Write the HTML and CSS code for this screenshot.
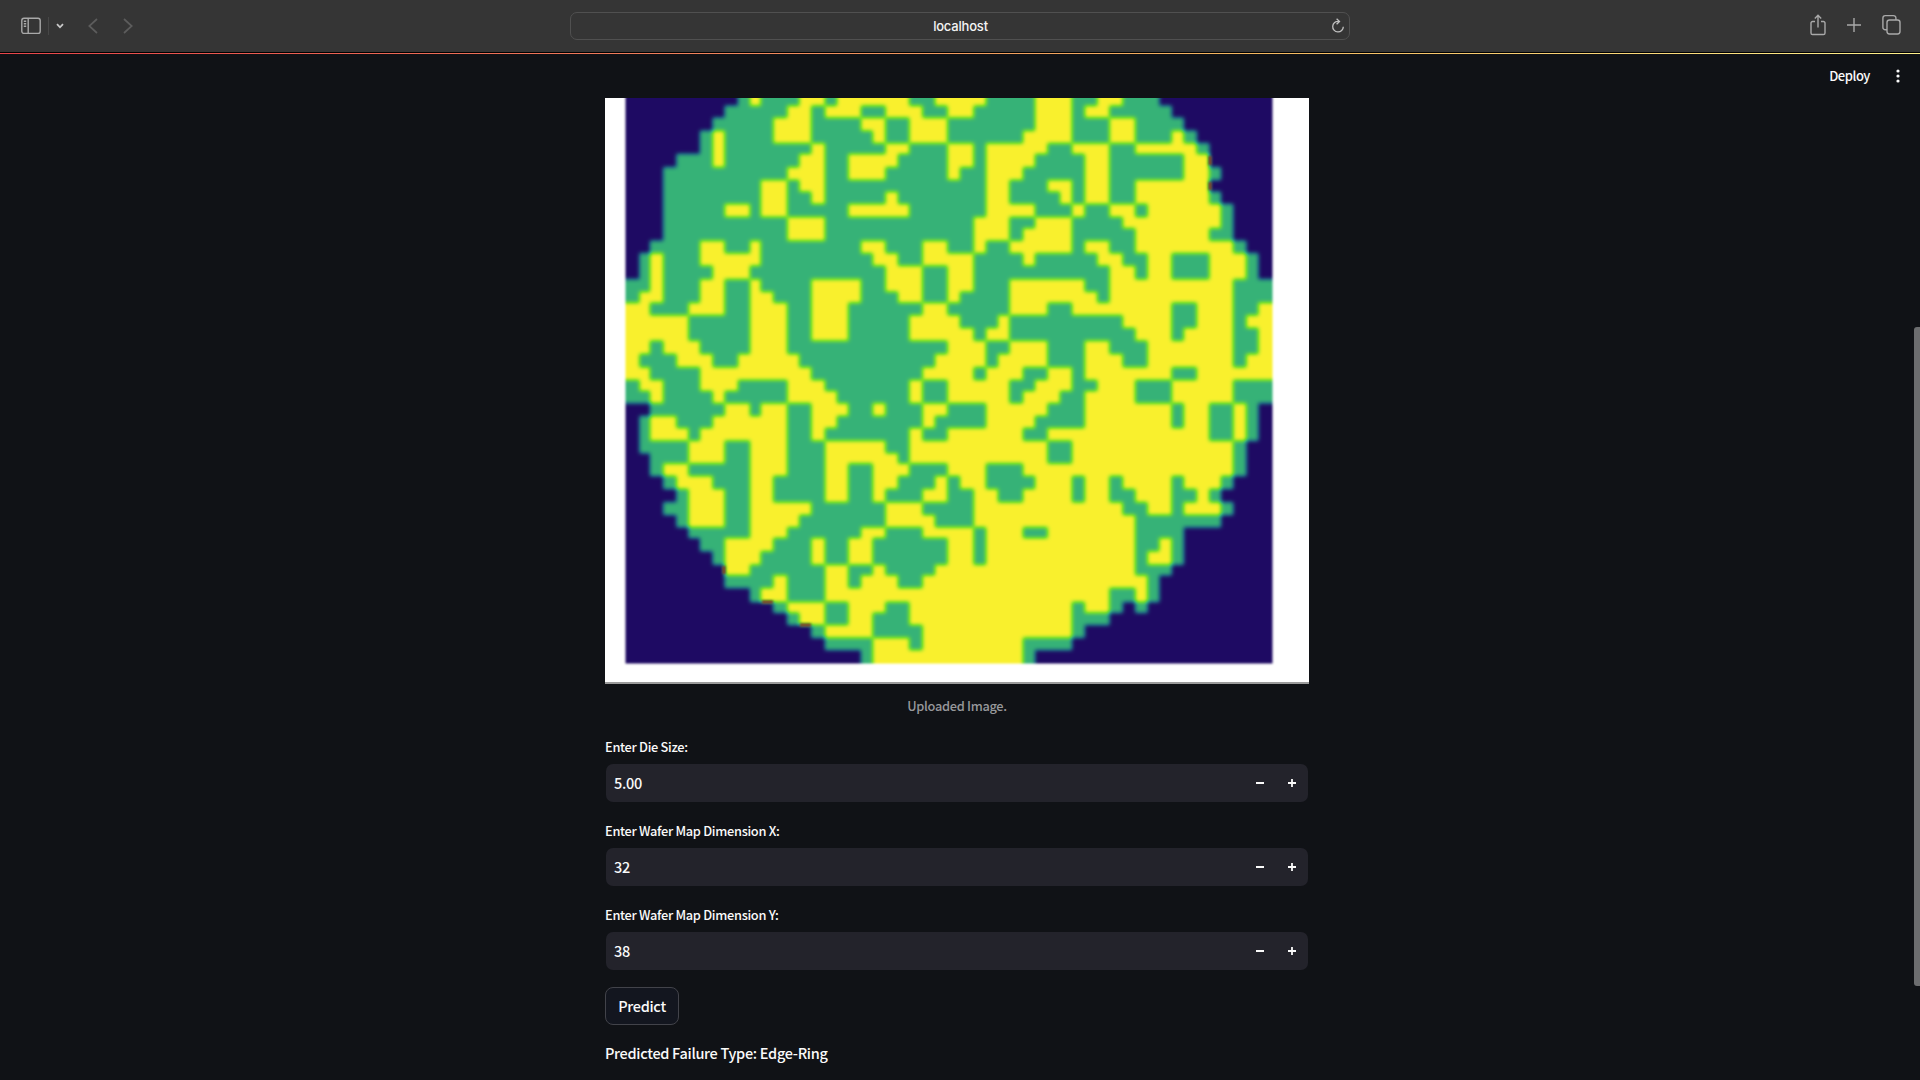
FILE: index.html
```html
<!DOCTYPE html>
<html lang="en">
<head>
<meta charset="utf-8">
<title>localhost</title>
<link rel="stylesheet" href="styles.css">
</head>
<body>
<header class="toolbar">
  <div class="tools tools-left">
    <svg class="ico sidebar" width="20" height="18" viewBox="0 0 20 18"><rect x=".8" y="1.2" width="18.4" height="15.2" rx="2.2"/><path d="M7.2 1.2v15.2M2.8 4.3h2.4M2.8 6.8h2.4M2.8 9.3h2.4"/></svg>
    <span class="divider"></span>
    <svg class="ico chevron" width="8" height="6" viewBox="0 0 8 6"><path d="M1 1.2 4 4.3 7 1.2"/></svg>
    <svg class="ico nav back" width="10" height="16" viewBox="0 0 10 16"><path d="M9 1 1.3 8 9 15"/></svg>
    <svg class="ico nav forward" width="10" height="16" viewBox="0 0 10 16"><path d="M1 1 8.7 8 1 15"/></svg>
  </div>
  <div class="address">
    <span class="host">localhost</span>
    <svg class="ico reload" width="14" height="16" viewBox="0 0 14 16"><path d="M7.6 3.4A5.3 5.3 0 1 0 12.3 8.7M5.6.8 8.5 3.5 5.6 6.3"/></svg>
  </div>
  <div class="tools tools-right">
    <svg class="ico" width="16" height="22" viewBox="0 0 16 22"><path d="M5 7.5H2.6A1.6 1.6 0 0 0 1 9.1v9.8a1.6 1.6 0 0 0 1.6 1.6h10.8a1.6 1.6 0 0 0 1.6-1.6V9.1a1.6 1.6 0 0 0-1.6-1.6H11M8 13.5V1.4M4.8 4.5 8 1.3l3.2 3.2"/></svg>
    <svg class="ico" width="14" height="22" viewBox="0 0 14 22"><path d="M7 4v14M0 11h14"/></svg>
    <svg class="ico" width="19" height="22" viewBox="0 0 19 22"><rect x="5" y="6" width="13" height="14" rx="2.4"/><path d="M5 15.8H3.3A2.4 2.4 0 0 1 .9 13.4V4A2.4 2.4 0 0 1 3.3 1.6h8.2A2.4 2.4 0 0 1 13.900 4v2"/></svg>
  </div>
</header>
<div class="accent"></div>
<div class="page">
  <div class="appbar">
    <span class="deploy">Deploy</span>
    <svg class="dots" width="4" height="14" viewBox="0 0 4 14"><circle cx="2" cy="2" r="1.6"/><circle cx="2" cy="7" r="1.6"/><circle cx="2" cy="12" r="1.6"/></svg>
  </div>
  <main class="content">
    <figure class="upload">
      <svg id="wafer" class="wafer" width="704" height="586" viewBox="605 98 704 586">
        <defs>
          <filter id="viridis" filterUnits="userSpaceOnUse" x="590" y="80" width="740" height="620" color-interpolation-filters="sRGB">
            <feGaussianBlur stdDeviation="2"/>
            <feComponentTransfer>
              <feFuncR type="table" tableValues=".118 .13 .21 .48 .98"/>
              <feFuncG type="table" tableValues=".04 .4 .70 .88 .945"/>
              <feFuncB type="table" tableValues=".39 .5 .47 .18 .18"/>
            </feComponentTransfer>
          </filter>
          <filter id="soft" filterUnits="userSpaceOnUse" x="590" y="80" width="740" height="620" color-interpolation-filters="sRGB"><feGaussianBlur stdDeviation="1.3"/></filter>
        </defs>
        <g filter="url(#viridis)">
          <rect x="560" y="60" width="800" height="660" fill="#000"/>
          <path id="pass" fill="#808080"/>
          <path id="fail" fill="#fff"/>
        </g>
        <path filter="url(#soft)" fill="#8a3a1c" d="M1208.500 156h3v9h-3zM1208.500 182h3v8h-3zM722.500 566h3v8h-3zM762 600.500h11v3h-11zM800 623.500h11v3h-11z"/>
        <path filter="url(#soft)" fill="#fff" fill-rule="evenodd" d="M580 60H1340V720H580ZM625.500 50V663.500H1272.500V50Z"/>
        <path fill="#9b9b9b" d="M605 682h704v2h-704z"/>
      </svg>
      <figcaption class="caption">Uploaded Image.</figcaption>
    </figure>
    <div class="field">
      <label class="label label-die">Enter Die Size:</label>
      <div class="input"><span class="value">5.00</span><svg class="step" width="40" height="10" viewBox="0 0 40 10"><path d="M0 5h8M32 5h8M36 1v8"/></svg></div>
    </div>
    <div class="field">
      <label class="label">Enter Wafer Map Dimension X:</label>
      <div class="input"><span class="value">32</span><svg class="step" width="40" height="10" viewBox="0 0 40 10"><path d="M0 5h8M32 5h8M36 1v8"/></svg></div>
    </div>
    <div class="field">
      <label class="label">Enter Wafer Map Dimension Y:</label>
      <div class="input"><span class="value">38</span><svg class="step" width="40" height="10" viewBox="0 0 40 10"><path d="M0 5h8M32 5h8M36 1v8"/></svg></div>
    </div>
    <button class="predict">Predict</button>
    <p class="result">Predicted Failure Type: Edge-Ring</p>
  </main>
  <div class="scroll-thumb"></div>
</div>
<script src="wafer.js"></script>
</body>
</html>
```
FILE: styles.css
```css
* { box-sizing: border-box; }
body {
  margin: 0;
  height: 1080px;
  overflow: hidden;
  display: flex;
  flex-direction: column;
  background: #101216;
  color: #fafafa;
  font-family: "Noto Sans CJK JP", "Noto Sans", sans-serif;
  font-weight: 500;
  letter-spacing: -0.3px;
}
.toolbar {
  flex: none;
  height: 52px;
  display: grid;
  grid-template-columns: 570px 780px 570px;
  align-items: center;
  background: #353535;
}
.tools { display: flex; align-items: center; }
.tools-left { padding-left: 21px; }
.tools-right { justify-content: flex-end; gap: 21px; padding: 0 19px 2px 0; }
.ico { display: block; fill: none; stroke: #a9a9a9; stroke-width: 1.4; }
.divider { width: 1px; height: 18px; margin: 0 7px; background: #474747; }
.chevron { stroke: #c8c8c8; stroke-width: 1.8; }
.nav { stroke: #5c5c5c; stroke-width: 1.7; }
.back { margin-left: 24px; }
.forward { margin-left: 25px; }
.address {
  height: 28px;
  display: grid;
  grid-template-columns: 1fr auto 1fr;
  align-items: center;
  padding-right: 4px;
  border: 1px solid #505050;
  border-radius: 7px;
}
.host {
  grid-column: 2;
  padding-left: 5px;
  font: 500 13px Inter, sans-serif;
  letter-spacing: -0.2px;
  color: #f4f4f4;
}
.reload { justify-self: end; stroke: #c0c0c0; stroke-width: 1.3; }
.accent {
  flex: none;
  height: 2px;
  border-top: 1px solid #000;
  background: linear-gradient(90deg, #e8454a, #f0805c 35%, #f5b860 65%, #fff08a) border-box;
  background-clip: padding-box;
}
.page { position: relative; flex: 1; display: flex; flex-direction: column; }
.appbar {
  height: 44px;
  display: flex;
  justify-content: flex-end;
  align-items: center;
  gap: 26px;
  padding: 0 20px 0 0;
}
.deploy { font-size: 13px; line-height: 20px; letter-spacing: -0.45px; }
.dots { fill: #fafafa; }
.content { width: 704px; margin-left: 605px; display: flex; flex-direction: column; }
.upload { margin: 0; }
.wafer { display: block; }
.caption {
  height: 22px;
  margin-top: 11px;
  text-align: center;
  font-size: 12.8px;
  line-height: 22px;
  color: #97989b;
}
.field { display: flex; flex-direction: column; height: 84px; }
.upload + .field { margin-top: 20px; }
.label { height: 20px; font-size: 12.8px; line-height: 20px; }
.input {
  height: 38px;
  margin: 7px 1px 0;
  padding: 0 12px 0 8px;
  display: flex;
  justify-content: space-between;
  align-items: center;
  border-radius: 7px;
  background: #23232b;
}
.value { font-size: 14.5px; line-height: 38px; }
.step { fill: none; stroke: #fafafa; stroke-width: 1.8; }
.predict {
  width: 74px;
  height: 38px;
  margin-top: -2px;
  padding: 0;
  border: 1px solid #42434a;
  border-radius: 8px;
  background: #13161f;
  color: inherit;
  font: inherit;
  font-size: 14.5px;
  line-height: 36px;
  letter-spacing: inherit;
}
.result { margin: 16px 0 0; font-size: 14.5px; line-height: 24px; }
.scroll-thumb {
  position: absolute;
  right: 0;
  top: 273px;
  width: 6px;
  height: 659px;
  border-radius: 3px 0 0 3px;
  background: #6c6d6f;
}
```
FILE: wafer.js
```js
// Grid lines of the die columns and rows.
const X = [626,639.5,650,663.3,676.5,688.5,700,712.7,724.7,738,750,760.7,773.3,787.3,799.3,811.3,825,837,848.3,861,872.7,885.5,898,909.3,922.5,935,947.5,960,973.7,986,998,1009.5,1023,1035,1047.5,1060,1072,1084.7,1097.3,1109.5,1122.7,1135.3,1147.5,1159.3,1171.7,1183.7,1196.7,1209.3,1221,1233.2,1246.3,1258.3,1272.5];
const Y = [98,105.7,117.7,130.7,143.3,154,167.3,180,191.7,204,217,228.3,240.7,253.3,265.7,279.3,291.7,302.7,315.3,328,340.7,354,367.3,380,391,403.3,416,428,440.7,453.3,463.5,476,489,502.3,515,527.3,538,551.3,564.7,575.3,588,602,612.7,625,637.7,650,663];

// Each row: extent of the wafer, then the runs of failing dies.
const ROWS = `9-43 10-11 14-16 17-23 25-29 33-36 38-40
8-44 13-15 16-19 21-24 26-28 33-36 37-39
7-45 12-15 19-21 23-26 33-36 39-41
6-46 7-8 12-15 20-21 23-26 32-36 39-41 44-45
6-47 7-8 15-16 21-23 26-28 29-34 36-39 41-46
4-47 7-8 14-16 18-22 26-28 29-33 37-39 45-47
3-48 13-16 18-21 26-27 29-32 37-39 45-47
3-47 11-13 14-16 29-31 34-36 37-39 41-47
3-48 11-13 15-16 21-22 29-31 35-36 37-39 41-47
3-49 8-10 11-13 18-23 29-33 36-37 39-41 42-48
3-49 13-16 28-31 33-36 40-48
3-49 13-16 28-31 32-36 41-47
2-50 6-8 10-11 19-21 24-26 28-29 31-36 37-39 41-49
1-51 2-3 6-11 20-22 24-28 32-33 38-40 42-44 47-50
1-51 2-3 7-10 21-24 26-28 39-41 42-44 47-50
0-52 2-3 6-8 10-11 15-19 21-24 26-28 31-37 39-49
0-52 1-3 6-8 10-12 15-19 22-24 26-27 31-38 39-49
0-52 0-2 5-8 10-13 15-18 24-26 31-34 36-44 46-49 51-52
0-52 0-5 10-13 15-18 23-27 30-31 40-44 46-49 50-52
0-52 0-5 10-13 15-18 23-28 29-31 41-44 45-49 51-52
0-52 0-2 3-6 10-13 26-29 31-34 37-39 42-49 51-52
0-52 0-1 4-7 9-14 25-29 30-34 37-40 42-49 50-52
0-52 0-2 6-15 24-28 29-32 34-36 37-44 46-52
0-52 1-3 6-9 13-16 23-24 26-31 33-36 38-41 44-49
0-52 2-3 7-8 13-17 23-24 26-31 32-35 37-41 44-49
2-51 8-10 11-13 15-18 20-21 24-26 29-34 37-44 45-47 49-50
1-51 2-4 7-13 15-17 24-25 29-33 37-44 45-47 49-50
1-51 2-5 6-13 15-16 23-24 26-32 34-47 49-50
1-50 5-8 10-13 16-21 23-34 36-49
2-50 5-8 10-13 16-22 23-34 36-49
2-50 3-5 10-13 16-18 20-23 26-29 32-49
3-49 4-7 10-12 16-18 20-22 25-26 27-29 33-36 37-39 40-44 45-48
4-48 5-8 10-12 16-18 20-21 24-26 28-30 32-36 37-39 41-44 46-47
3-49 5-8 10-15 21-24 28-40 42-44 45-48
4-48 5-8 10-14 21-25 28-41
5-45 10-13 19-21 24-28 29-32 34-41
6-45 8-12 15-16 18-20 26-28 29-41 43-44
7-45 8-11 15-16 18-20 26-28 29-41 42-44
8-44 8-10 16-18 20-21 25-41
8-43 12-13 16-18 19-22 24-42
10-43 11-13 16-39 41-42
12-40 13-16 18-21 23-36 37-39
13-39 14-16 18-20 23-36
15-37 16-20 24-36
16-36 20-23 24-32
19-33 20-32`.split("\n").map(r => r.split(" ").map(s => s.split("-").map(Number)));

const box = (r, [a, b]) => `M${X[a]} ${Y[r] - (r ? 0 : 20)}H${X[b]}V${Y[r + 1]}H${X[a]}Z`;
const pass = ROWS.map((row, r) => {
  const [a, b] = row[0];
  // Rows that reach the frame continue under it so the edge keeps its colour.
  return box(r, [a, b]) + (a === 0 ? `M610 ${Y[r]}H626V${Y[r + 1]}H610Z` : "") + (b === 52 ? `M1272 ${Y[r]}H1290V${Y[r + 1]}H1272Z` : "");
}).join("") + box(41, [41, 42]) + `M${X[19]} 662H${X[33]}V680H${X[19]}Z`;
const fail = ROWS.map((row, r) => row.slice(1).map(run => box(r, run)
  + (run[0] === 0 ? `M610 ${Y[r]}H627V${Y[r + 1]}H610Z` : "")
  + (run[1] === 52 ? `M1272 ${Y[r]}H1290V${Y[r + 1]}H1272Z` : "")).join("")).join("")
  + `M${X[20]} 662H${X[32]}V680H${X[20]}Z`;
document.getElementById("pass").setAttribute("d", pass);
document.getElementById("fail").setAttribute("d", fail);
```
